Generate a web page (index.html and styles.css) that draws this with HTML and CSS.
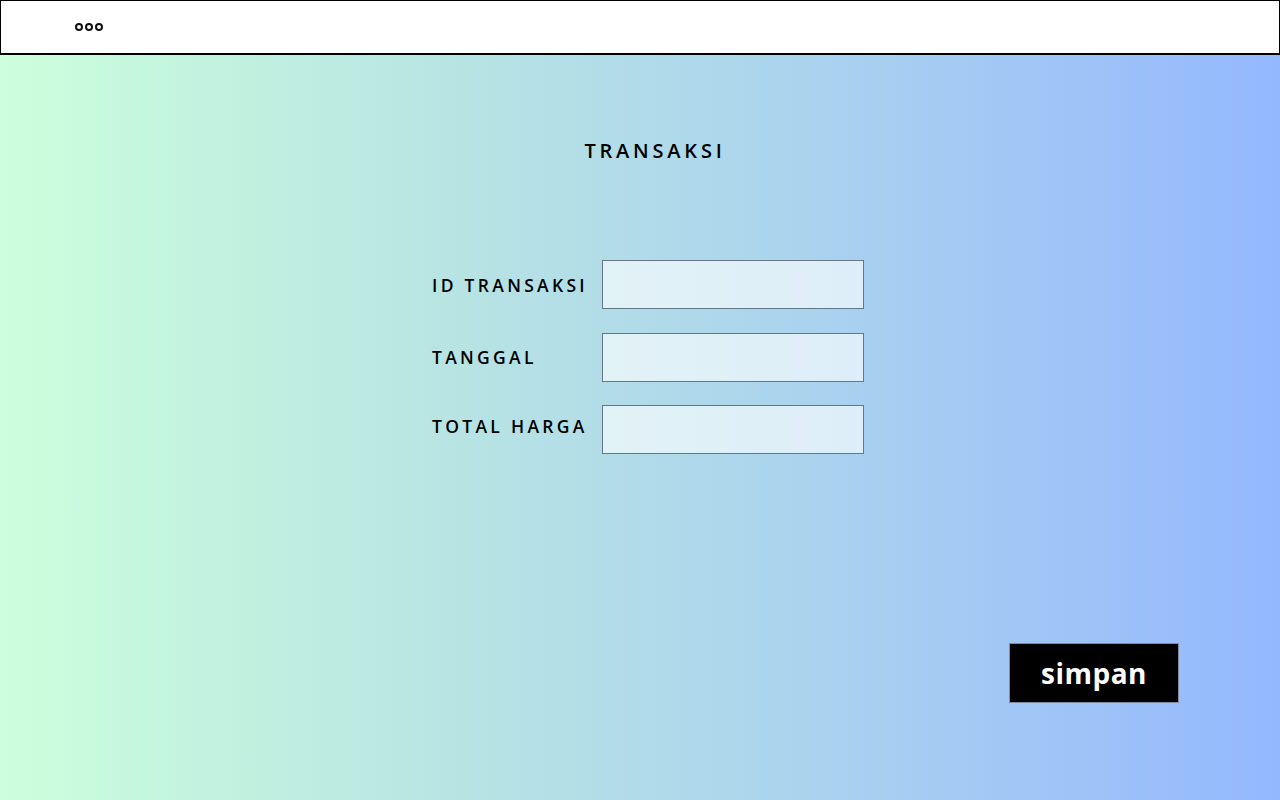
FILE: index.html
```html
<!DOCTYPE html>
<html lang="id">
<head>
<meta charset="utf-8">
<title>Transaksi</title>
<link rel="stylesheet" href="styles.css">
</head>
<body>
<header class="topbar">
  <span class="dots" aria-label="menu">
    <span class="dot"></span><span class="dot"></span><span class="dot"></span>
  </span>
</header>
<main class="page">
  <h1 class="title">TRANSAKSI</h1>
  <form class="form">
    <label class="label" for="id">ID TRANSAKSI</label>
    <input class="field" id="id" type="text">
    <label class="label" for="tgl">TANGGAL</label>
    <input class="field" id="tgl" type="text">
    <label class="label label-up" for="total">TOTAL HARGA</label>
    <input class="field" id="total" type="text">
  </form>
  <button class="save" type="button">simpan</button>
</main>
</body>
</html>
```

FILE: styles.css
```css
* { box-sizing: border-box; }
html, body { margin: 0; padding: 0; }
body {
  width: 1280px;
  height: 800px;
  overflow: hidden;
  font-family: "Open Sans", "Inter", sans-serif;
  color: #000;
}
.topbar {
  height: 55px;
  background: #fff;
  border: 1px solid #000;
  border-bottom-width: 2px;
  display: flex;
  align-items: center;
  padding-left: 74px;
}
.dots { display: flex; gap: 2px; }
.dot {
  width: 8px;
  height: 8px;
  border: 2px solid #111;
  border-radius: 50%;
}
.page {
  height: 745px;
  background: linear-gradient(to right, #ccffdc 0%, #b8e4e3 35%, #a9d2ef 65%, #94b8fe 100%);
  display: flex;
  flex-direction: column;
}
.title {
  margin: 80px 0 0 30px;
  text-align: center;
  font-size: 20px;
  font-weight: 600;
  letter-spacing: 3.8px;
  line-height: 32px;
}
.form {
  margin: 93px 0 0 432px;
  display: grid;
  grid-template-columns: 170px 262px;
  grid-auto-rows: 49px;
  row-gap: 23.5px;
  align-items: center;
}
.label {
  font-size: 17.5px;
  font-weight: 600;
  letter-spacing: 3.3px;
  white-space: nowrap;
}
.label-up { margin-top: -8px; }
.field {
  width: 262px;
  height: 49px;
  border: 1px solid #667684;
  background: rgba(255, 255, 255, 0.62);
  font: inherit;
}
.save {
  align-self: flex-end;
  margin: 189px 101px 0 0;
  width: 170px;
  height: 60px;
  background: #000;
  color: #fff;
  border: 1px solid #7d8aa0;
  font-family: "Open Sans", "Inter", sans-serif;
  font-size: 28px;
  font-weight: 700;
  letter-spacing: 0.5px;
  padding: 0;
}
```
